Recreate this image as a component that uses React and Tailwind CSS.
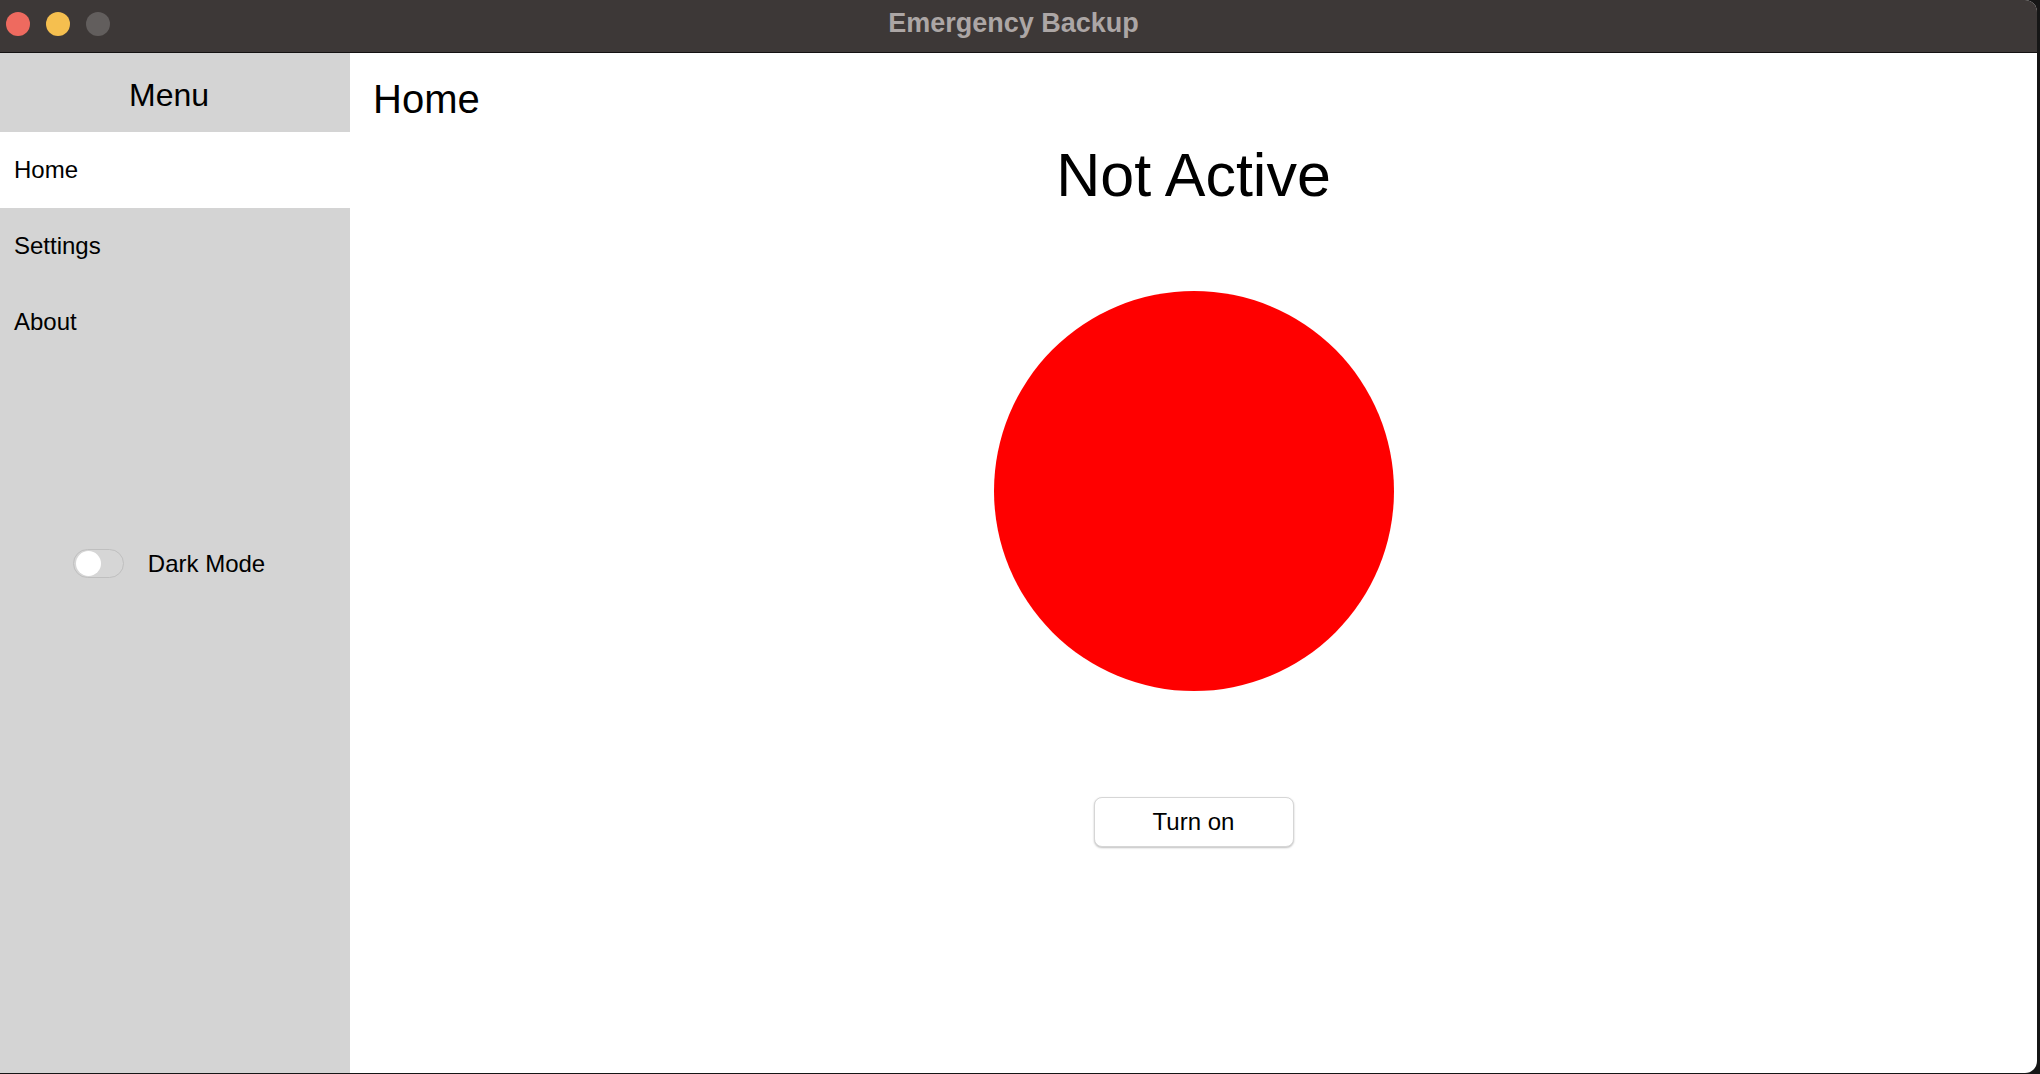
export default function App() {
  const font = { fontFamily: '"Liberation Sans", Arial, sans-serif' }

  return (
    <div className="w-screen h-screen bg-[#161616] overflow-hidden" style={font}>
      <div className="w-[2037px] h-[1073px] flex flex-col bg-white rounded-r-[12px] overflow-hidden">
        {/* title bar */}
        <div className="relative h-[53px] shrink-0 bg-[#3d3837] border-b border-[#141212] flex items-center justify-center pb-[5px] pr-[10px]">
          <div className="absolute left-[6px] top-[12px] flex gap-[16px]">
            <span className="w-[24px] h-[24px] rounded-full bg-[#ee6a5f]" />
            <span className="w-[24px] h-[24px] rounded-full bg-[#f5bf4f]" />
            <span className="w-[24px] h-[24px] rounded-full bg-[#625e5d]" />
          </div>
          <span className="text-[27px] font-bold text-[#aca6a5] leading-none">Emergency Backup</span>
        </div>

        <div className="flex flex-1 min-h-0">
          {/* sidebar */}
          <aside className="w-[350px] shrink-0 bg-[#d4d4d4] flex flex-col text-black">
            <div className="h-[79px] pt-[24px] pr-[12px] text-center text-[32px] leading-[37px]">Menu</div>
            <div className="h-[76px] bg-white pl-[14px] text-[24px] leading-[76px]">Home</div>
            <div className="h-[76px] pl-[14px] text-[24px] leading-[76px]">Settings</div>
            <div className="h-[76px] pl-[14px] text-[24px] leading-[76px]">About</div>
            <div className="mt-[189px] pr-[12px] flex items-center justify-center gap-[24px]">
              <div className="w-[51px] h-[29px] rounded-full border border-[#bfbfbf] bg-[#d6d6d6] flex items-center pl-[2px]">
                <div className="w-[25px] h-[25px] rounded-full bg-white" />
              </div>
              <span className="text-[24px] leading-[29px]">Dark Mode</span>
            </div>
          </aside>

          {/* main */}
          <main className="flex-1 flex flex-col text-black">
            <h1 className="pt-[23px] pl-[23px] text-[40px] leading-[46px]">Home</h1>
            <div className="flex flex-col items-center">
              <h2 className="mt-[18px] text-[61px] leading-[70px]">Not Active</h2>
              <div className="mt-[81px] w-[400px] h-[400px] rounded-full bg-[#ff0000]" />
              <button className="mt-[106px] w-[200px] h-[50px] rounded-[8px] border border-[#d6d6d6] bg-white shadow-[0_1px_2px_rgba(0,0,0,0.25)] text-[24px] leading-none">
                Turn on
              </button>
            </div>
          </main>
        </div>
      </div>
    </div>
  )
}
